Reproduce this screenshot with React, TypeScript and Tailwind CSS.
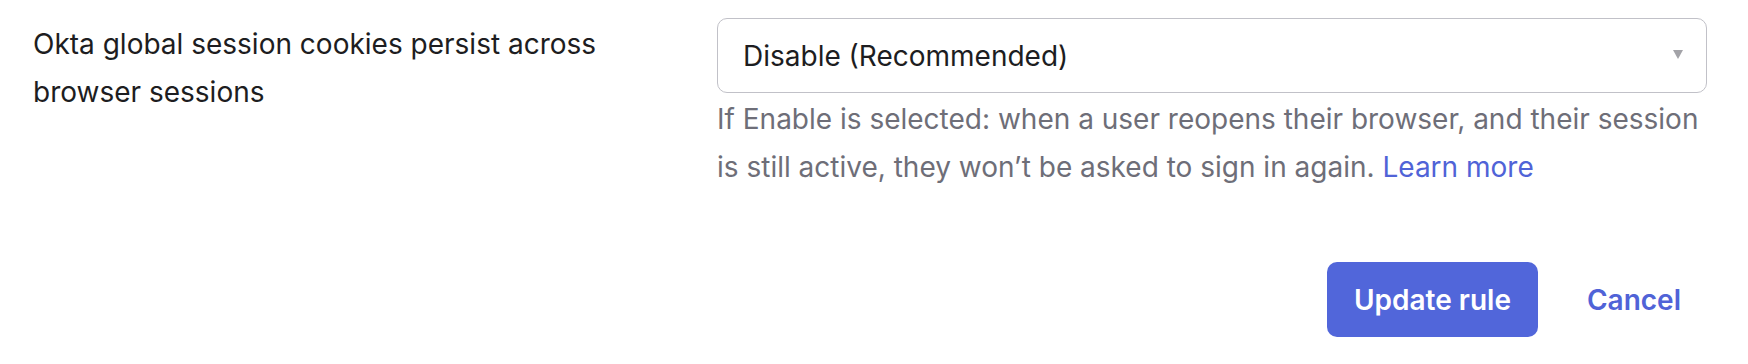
import React, { useState } from 'react';

const options = ['Disable (Recommended)', 'Enable'];

const SessionRuleForm = () => {
  const [value, setValue] = useState(options[0]);

  return (
    <div className="w-[1748px] h-[364px] bg-white font-['Inter',sans-serif] text-[28px] pl-[33px] pr-[41px] pt-[18px]">
      <div className="flex items-start">
        <label className="w-[684px] pr-[60px] mt-[2px] text-[#1d1d21] leading-[48px]">
          Okta global session cookies persist across browser sessions
        </label>

        <div className="flex-1">
          <div className="relative">
            <select
              value={value}
              onChange={(e) => setValue(e.target.value)}
              className="w-full h-[75px] appearance-none rounded-[10px] border border-[#c1c1c8] bg-white pl-[25px] pr-[60px] text-[28px] text-[#1d1d21] outline-none"
            >
              {options.map((opt) => (
                <option key={opt} value={opt}>{opt}</option>
              ))}
            </select>
            {/* caret */}
            <svg
              className="pointer-events-none absolute right-[24px] top-[32px]"
              width="10"
              height="9"
              viewBox="0 0 10 9"
            >
              <path d="M0 0 H10 L5 9 Z" fill="#a3a3a8" />
            </svg>
          </div>
          <p className="mt-[2px] leading-[48px] text-[#6e6e78]">
            If Enable is selected: when a user reopens their browser, and their session is still active, they won’t be asked to sign in again.{' '}
            <a href="#" className="text-[#5063d7]">Learn more</a>
          </p>
        </div>
      </div>

      <div className="flex justify-end items-center mt-[71px]">
        <button className="h-[75px] px-[27px] rounded-[10px] bg-[#5166da] text-white font-semibold">
          Update rule
        </button>
        <button className="h-[75px] px-[26px] ml-[23px] text-[#5063d7] font-semibold">
          Cancel
        </button>
      </div>
    </div>
  );
};

export default function App() {
  return <SessionRuleForm />;
}
